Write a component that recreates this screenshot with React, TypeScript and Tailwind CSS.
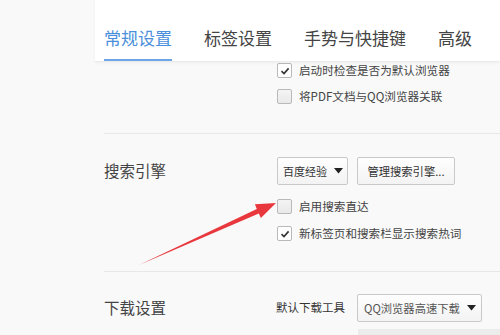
const font = { fontFamily: '"Noto Sans CJK SC", "Noto Sans", sans-serif' };

function CheckBox({ checked }: { checked?: boolean }) {
  return (
    <div
      className={`w-[15px] h-[15px] shrink-0 rounded-[2px] border border-[#b9b9b9] flex items-center justify-center ${
        checked ? 'bg-white' : 'bg-gradient-to-b from-[#f4f4f4] to-[#e9e9e9]'
      }`}
    >
      {checked && (
        <svg width="10" height="10" viewBox="0 0 10 10">
          <path d="M1.5 5.2 L4 7.6 L8.6 2.4" fill="none" stroke="#333" strokeWidth="1.6" />
        </svg>
      )}
    </div>
  );
}

function CheckRow({ checked, label }: { checked?: boolean; label: string }) {
  return (
    <div className="flex items-center gap-[7px] h-[15px]">
      <CheckBox checked={checked} />
      <span className="text-[11.6px] leading-[15px] text-[#444] whitespace-nowrap">{label}</span>
    </div>
  );
}

function Caret() {
  return (
    <svg width="9" height="6" viewBox="0 0 9 6" className="shrink-0">
      <path d="M0 0 H9 L4.5 5.5 Z" fill="#222" />
    </svg>
  );
}

export default function App() {
  return (
    <div className="w-[500px] h-[335px] overflow-hidden bg-[#f9f9f9] relative" style={font}>
      {/* Tabs */}
      <div className="ml-[95px] h-[62px] bg-white border-b border-[#ececec] shadow-[0_1px_3px_rgba(0,0,0,0.05)] pl-[9px] flex gap-8 relative z-10">
        <div className="h-full flex flex-col justify-end">
          <span className="text-[17px] leading-[20px] text-[#4a8fdb] mb-[11px]">常规设置</span>
          <div className="h-[2px] bg-[#6ba6e6]" />
        </div>
        <div className="h-full flex flex-col justify-end">
          <span className="text-[17px] leading-[20px] text-[#444] mb-[13px]">标签设置</span>
        </div>
        <div className="h-full flex flex-col justify-end">
          <span className="text-[17px] leading-[20px] text-[#444] mb-[13px]">手势与快捷键</span>
        </div>
        <div className="h-full flex flex-col justify-end">
          <span className="text-[17px] leading-[20px] text-[#444] mb-[13px]">高级</span>
        </div>
      </div>

      <div className="pl-[104px]">
        {/* Startup section */}
        <div className="pl-[173px] pt-[1px] pb-[29px] flex flex-col gap-[11px]">
          <CheckRow checked label="启动时检查是否为默认浏览器" />
          <CheckRow label="将PDF文档与QQ浏览器关联" />
        </div>

        <div className="border-t border-[#e8e8e8]" />

        {/* Search engine */}
        <div className="pt-[23px] pb-[30px] flex">
          <div className="w-[173px] shrink-0 h-[28px] flex items-center text-[15.5px] text-[#444]">搜索引擎</div>
          <div className="flex flex-col shrink-0">
            <div className="flex gap-[9px]">
              <div className="w-[71px] h-[28px] rounded-[2px] border border-[#c9c9c9] bg-gradient-to-b from-[#fefefe] to-[#f3f3f3] flex items-center justify-between pl-[5px] pr-[4px] text-[11px] text-[#333] whitespace-nowrap">
                <span>百度经验</span>
                <Caret />
              </div>
              <div className="w-[98px] h-[28px] rounded-[2px] border border-[#c9c9c9] bg-gradient-to-b from-[#fefefe] to-[#f3f3f3] flex items-center justify-center text-[11.3px] text-[#333] whitespace-nowrap">
                管理搜索引擎...
              </div>
            </div>
            <div className="mt-[14px] flex flex-col gap-[12px]">
              <CheckRow label="启用搜索直达" />
              <CheckRow checked label="新标签页和搜索栏显示搜索热词" />
            </div>
          </div>
        </div>

        <div className="border-t border-[#e8e8e8]" />

        {/* Download */}
        <div className="pt-[22px] flex">
          <div className="w-[172px] shrink-0 h-[28px] flex items-center text-[15.5px] text-[#444]">下载设置</div>
          <div className="flex flex-col shrink-0">
            <div className="flex items-center gap-[12px]">
              <span className="text-[11.5px] text-[#333] whitespace-nowrap">默认下载工具</span>
              <div className="w-[125px] shrink-0 h-[28px] rounded-[2px] border border-[#c9c9c9] bg-gradient-to-b from-[#fefefe] to-[#f3f3f3] flex items-center justify-between pl-[6px] pr-[5px] text-[11.3px] text-[#555] whitespace-nowrap">
                <span>QQ浏览器高速下载</span>
                <Caret />
              </div>
            </div>
            <div className="ml-[82px] mt-[7px] h-[20px] w-[160px] bg-[#ececec]" />
          </div>
        </div>
      </div>

      {/* Red annotation arrow */}
      <svg className="absolute left-0 top-0 pointer-events-none" width="500" height="335" viewBox="0 0 500 335">
        <polygon
          points="139,265 256.8,208.9 254.9,204.3 276,203 260.9,218.1 258.8,213.5"
          fill="#e8383d"
        />
      </svg>
    </div>
  );
}
